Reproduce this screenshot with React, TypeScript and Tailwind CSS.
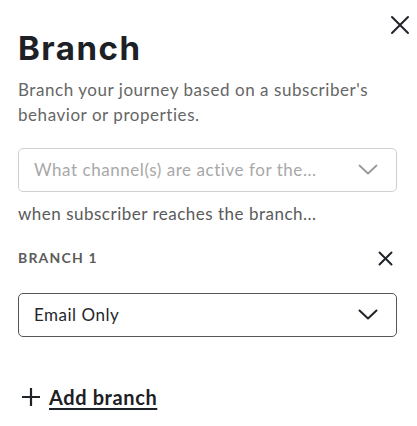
import React from "react";

const Chevron = ({ color, w }: { color: string; w: number }) => (
  <svg width="20" height="12" viewBox="0 0 20 12" fill="none">
    <path d="M1.5 1.5 L10 9.5 L18.5 1.5" stroke={color} strokeWidth={w} strokeLinecap="round" strokeLinejoin="round" />
  </svg>
);

const XIcon = ({ size, stroke }: { size: number; stroke: number }) => (
  <svg width={size} height={size} viewBox="0 0 20 20" fill="none">
    <path d="M2 2 L18 18 M18 2 L2 18" stroke="#1f2328" strokeWidth={stroke} strokeLinecap="round" />
  </svg>
);

export default function App() {
  return (
    <div
      className="w-[417px] h-[426px] bg-white overflow-hidden relative"
      style={{ fontFamily: "Lato, 'Noto Sans', sans-serif" }}
    >
      <button className="absolute left-[390px] top-[15px] w-[20px] h-[20px] flex items-center justify-center">
        <XIcon size={20} stroke={2} />
      </button>
      <div className="flex flex-col pl-[18px] pr-[20px] pt-[26px]">
        <h1
          className="text-[33px] leading-[44px] font-bold text-[#1d2025] tracking-[1.5px]"
          style={{ fontFamily: "Inter, Lato, sans-serif" }}
        >
          Branch
        </h1>
        <p className="mt-[7px] text-[17px] leading-[25px] text-[#666666] tracking-[0.55px]">
          Branch your journey based on a subscriber's behavior or properties.
        </p>
        <div className="mt-[21px] h-[44px] border border-[#cfcfcf] rounded-[5px] flex items-center justify-between pl-[15px] pr-[18px]">
          <span className="text-[17px] text-[#a8a8a8] tracking-[0.55px]">What channel(s) are active for the...</span>
          <Chevron color="#9a9a9a" w={1.8} />
        </div>
        <p className="mt-[11px] text-[17px] leading-[22px] text-[#5a5a5a] tracking-[0.5px]">
          when subscriber reaches the branch...
        </p>
        <div className="mt-[23px] flex items-center justify-between pr-[4px]">
          <span className="text-[14px] font-bold text-[#5c5c5c] tracking-[1.2px] leading-[20px]">BRANCH 1</span>
          <XIcon size={15} stroke={2.6} />
        </div>
        <div className="mt-[25px] h-[44px] border border-[#555555] rounded-[5px] flex items-center justify-between pl-[15px] pr-[18px]">
          <span className="text-[17px] text-[#24272b] tracking-[0.5px]">Email Only</span>
          <Chevron color="#1f2328" w={2} />
        </div>
        <div className="mt-[45px] flex items-center gap-[8px] pl-[3px]">
          <svg width="20" height="20" viewBox="0 0 20 20" fill="none">
            <path d="M10 1 V19 M1 10 H19" stroke="#1f2328" strokeWidth="2.2" />
          </svg>
          <span
            className="text-[20px] font-bold text-[#1d2025] tracking-[0.6px] underline underline-offset-[3px] decoration-[2px]"
          >
            Add branch
          </span>
        </div>
      </div>
    </div>
  );
}
